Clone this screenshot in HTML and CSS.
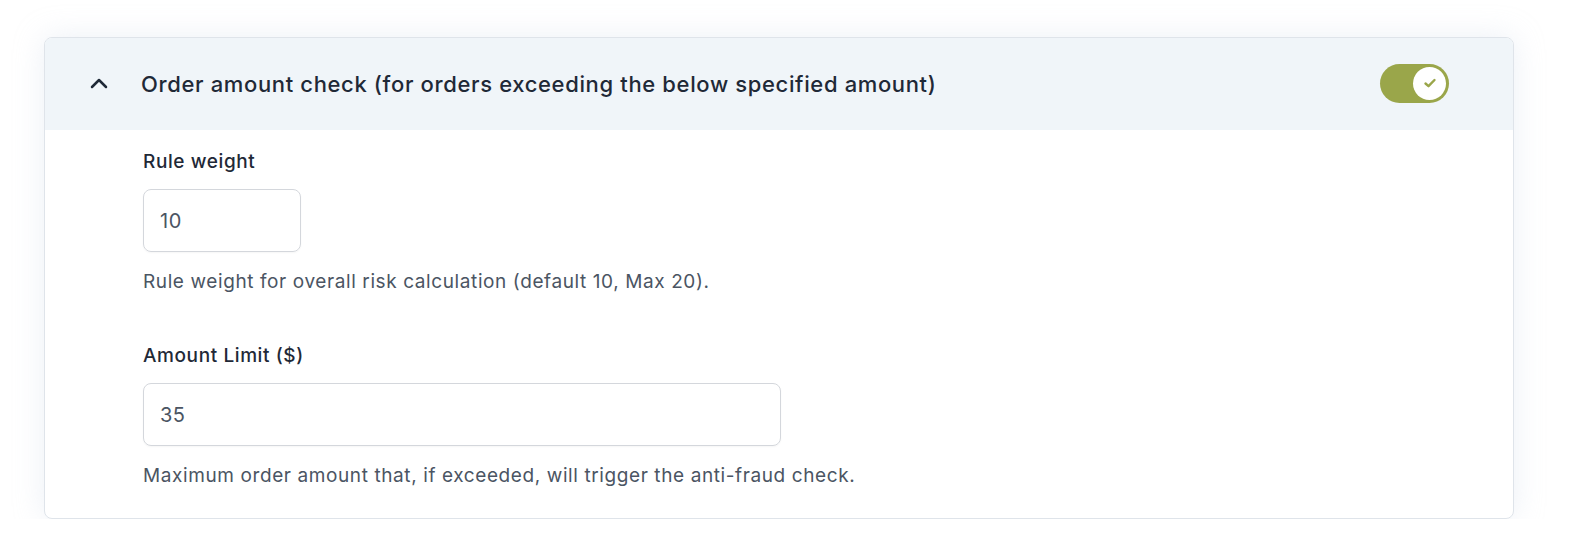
FILE: index.html
```html
<!DOCTYPE html>
<html>
<head>
<meta charset="utf-8">
<link rel="stylesheet" href="styles.css">
</head>
<body>
<div class="page">
  <section class="card">
    <header class="card-head">
      <svg class="chev" width="20" height="12" viewBox="0 0 20 12"><path d="M3 10 L10 3 L17 10" fill="none" stroke="#1f2937" stroke-width="2.5" stroke-linecap="round" stroke-linejoin="round"/></svg>
      <h2 class="title">Order amount check (for orders exceeding the below specified amount)</h2>
      <div class="toggle">
        <span class="knob">
          <svg width="14" height="12" viewBox="0 0 14 12"><path d="M2.5 6.5 L5.5 9.2 L11.5 3" fill="none" stroke="#9aa64a" stroke-width="2.4" stroke-linecap="round" stroke-linejoin="round"/></svg>
        </span>
      </div>
    </header>
    <div class="card-body">
      <div class="field">
        <label class="label">Rule weight</label>
        <div class="input small">10</div>
        <p class="help">Rule weight for overall risk calculation (default 10, Max 20).</p>
      </div>
      <div class="field">
        <label class="label">Amount Limit ($)</label>
        <div class="input wide">35</div>
        <p class="help">Maximum order amount that, if exceeded, will trigger the anti-fraud check.</p>
      </div>
    </div>
  </section>
</div>
</body>
</html>
```
FILE: styles.css
```css
html, body { margin: 0; padding: 0; background: #ffffff; }
body { font-family: Inter, "Noto Sans", sans-serif; color: #1f2937; }
.page { padding: 37px 58px 0 44px; }
.card {
  width: 1470px;
  box-sizing: border-box;
  border: 1px solid #dfe4ea;
  border-radius: 8px;
  background: #fff;
  overflow: hidden;
  box-shadow: 0 0 30px rgba(200, 212, 228, 0.35);
}
.card-head {
  display: flex;
  align-items: center;
  height: 92px;
  box-sizing: border-box;
  background: #f0f5f9;
  padding: 0 64px 0 44px;
}
.chev { flex: none; margin-right: 32px; margin-top: -2px; }
.title {
  margin: 0;
  flex: 1;
  font-size: 22px;
  font-weight: 500;
  color: #1f2937;
  letter-spacing: 0.64px;
}
.toggle {
  flex: none;
  width: 69px;
  height: 39px;
  border-radius: 20px;
  background: #9aa64a;
  display: flex;
  align-items: center;
  justify-content: flex-end;
  padding: 0 3px;
  box-sizing: border-box;
  margin-top: -2px;
}
.knob {
  width: 33px;
  height: 33px;
  border-radius: 50%;
  background: #fff;
  display: flex;
  align-items: center;
  justify-content: center;
}
.card-body { padding: 20px 0 30px 98px; }
.field + .field { margin-top: 50px; }
.label {
  display: block;
  font-size: 19px;
  font-weight: 500;
  color: #1f2937;
  line-height: 24px;
  letter-spacing: 0.6px;
}
.input {
  margin-top: 15px;
  height: 63px;
  box-sizing: border-box;
  border: 1px solid #d4d7dc;
  border-radius: 8px;
  padding: 0 16px;
  display: flex;
  align-items: center;
  font-size: 20px;
  color: #4b5563;
  letter-spacing: 0.5px;
  box-shadow: 0 1px 2px rgba(0,0,0,0.04);
}
.small { width: 158px; }
.wide { width: 638px; }
.help {
  margin: 18px 0 0;
  font-size: 19px;
  line-height: 24px;
  color: #4b5563;
  letter-spacing: 0.6px;
}
```
